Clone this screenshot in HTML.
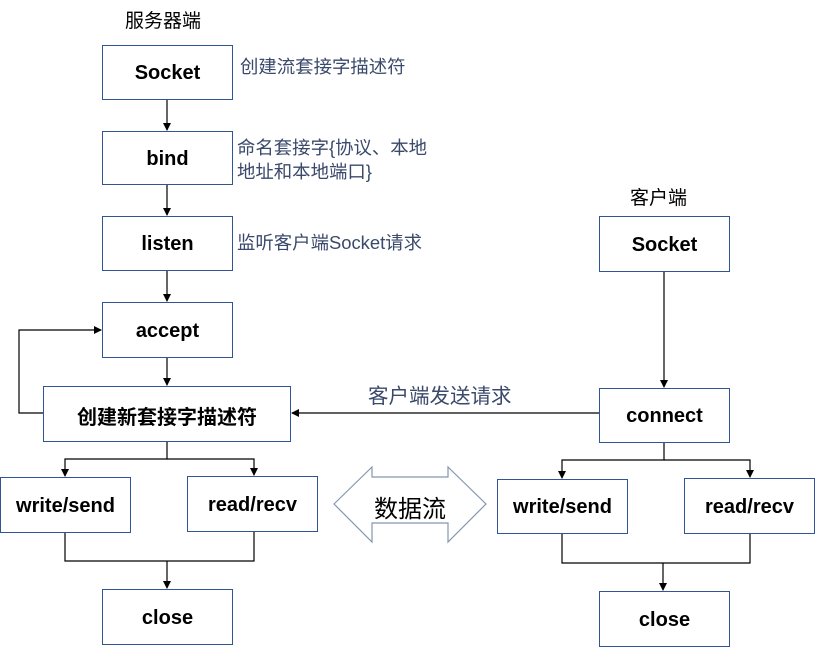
<!DOCTYPE html>
<html><head><meta charset="utf-8"><style>
body{margin:0;width:815px;height:647px;background:#fff;overflow:hidden;position:relative;font-family:"Liberation Sans","Noto Sans CJK SC",sans-serif}
.b{position:absolute;box-sizing:border-box;border:1.3px solid #2f5597;background:#fff;display:flex;align-items:center;justify-content:center;font-size:20px;color:#000;font-weight:bold;padding-top:2px}
.t{position:absolute;font-size:18.4px;color:#3b4a6b;white-space:nowrap;line-height:24px}
.h{position:absolute;font-size:19px;color:#000;white-space:nowrap}
svg{position:absolute;left:0;top:0}
</style></head><body>
<svg width="815" height="647">
<defs><marker id="a" markerWidth="8" markerHeight="8" refX="7" refY="4" orient="auto" markerUnits="userSpaceOnUse"><path d="M0,0 L8,4 L0,8 z" fill="#000"/></marker></defs>
<g stroke="#000" stroke-width="1.2" fill="none">
<line x1="167" y1="99" x2="167" y2="130" marker-end="url(#a)"/>
<line x1="167" y1="184" x2="167" y2="215" marker-end="url(#a)"/>
<line x1="167" y1="270" x2="167" y2="301" marker-end="url(#a)"/>
<line x1="167" y1="357" x2="167" y2="385" marker-end="url(#a)"/>
<polyline points="43,413 19,413 19,330 101,330" marker-end="url(#a)"/>
<polyline points="167,441 167,459 65,459 65,476" marker-end="url(#a)"/>
<polyline points="167,459 254,459 254,475" marker-end="url(#a)"/>
<polyline points="65,532 65,561 254,561 254,531"/>
<line x1="167" y1="561" x2="167" y2="588" marker-end="url(#a)"/>
<line x1="599" y1="413" x2="292" y2="413" marker-end="url(#a)"/>
<line x1="664" y1="271" x2="664" y2="387" marker-end="url(#a)"/>
<polyline points="664,442 664,460 562,460 562,478" marker-end="url(#a)"/>
<polyline points="664,460 750,460 750,477" marker-end="url(#a)"/>
<polyline points="562,533 562,563 750,563 750,533"/>
<line x1="663" y1="563" x2="663" y2="590" marker-end="url(#a)"/>
</g>
<path d="M334,504 L372,467 L372,477 L448,477 L448,467 L486,504 L448,542 L448,523 L372,523 L372,542 Z" fill="#fff" stroke="#8497b0" stroke-width="1.2"/>
</svg>
<div class="h" style="left:125px;top:6px">服务器端</div>
<div class="h" style="left:630px;top:183px">客户端</div>
<div class="b" style="left:102px;top:45px;width:131px;height:55px">Socket</div>
<div class="b" style="left:102px;top:131px;width:131px;height:54px">bind</div>
<div class="b" style="left:102px;top:216px;width:131px;height:55px">listen</div>
<div class="b" style="left:102px;top:302px;width:131px;height:56px">accept</div>
<div class="b" style="left:43px;top:386px;width:248px;height:56px">创建新套接字描述符</div>
<div class="b" style="left:0px;top:477px;width:131px;height:56px">write/send</div>
<div class="b" style="left:187px;top:476px;width:131px;height:56px">read/recv</div>
<div class="b" style="left:102px;top:589px;width:131px;height:56px">close</div>
<div class="b" style="left:599px;top:216px;width:131px;height:56px">Socket</div>
<div class="b" style="left:599px;top:388px;width:131px;height:55px">connect</div>
<div class="b" style="left:497px;top:479px;width:131px;height:55px">write/send</div>
<div class="b" style="left:684px;top:478px;width:131px;height:56px">read/recv</div>
<div class="b" style="left:599px;top:591px;width:131px;height:56px">close</div>
<div class="t" style="left:240px;top:55px">创建流套接字描述符</div>
<div class="t" style="left:237px;top:136px">命名套接字{协议、本地<br>地址和本地端口}</div>
<div class="t" style="left:237px;top:231px">监听客户端Socket请求</div>
<div class="t" style="left:368px;top:385px;font-size:20.5px">客户端发送请求</div>
<div class="h" style="left:374px;top:489px;font-size:24px">数据流</div>
</body></html>
